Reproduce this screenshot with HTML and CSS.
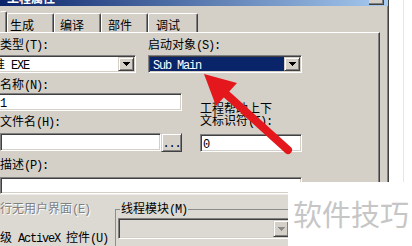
FILE: index.html
```html
<!DOCTYPE html>
<html>
<head>
<meta charset="utf-8">
<link rel="stylesheet" href="styles.css">
</head>
<body>
<div class="screen">
  <div class="dialog">
    <div class="titlebar"><span class="title">工程属性</span><span class="tclose"></span></div>
    <div class="tabs">
      <div class="tab sel"></div>
      <div class="tab t1">生成</div>
      <div class="tab t2">编译</div>
      <div class="tab t3">部件</div>
      <div class="tab t4">调试</div>
    </div>
    <div class="panel">
      <div class="rowA">
        <div class="fieldL">
          <div class="lbl">类型<span class="m">(T):</span></div>
          <div class="combo sunk cL">
            <div class="ctext">标准<span class="m"> EXE</span></div>
            <div class="dd raise"><svg width="7" height="4" viewBox="0 0 7 4"><path d="M0 0h7v1H0zM1 1h5v1H1zM2 2h3v1H2zM3 3h1v1H3z" fill="#000"/></svg></div>
          </div>
        </div>
        <div class="fieldR">
          <div class="lbl">启动对象<span class="m">(S):</span></div>
          <div class="combo sunk cR">
            <div class="ctext hl"><span class="m">Sub Main</span></div>
            <div class="dd raise"><svg width="7" height="4" viewBox="0 0 7 4"><path d="M0 0h7v1H0zM1 1h5v1H1zM2 2h3v1H2zM3 3h1v1H3z" fill="#000"/></svg></div>
          </div>
        </div>
      </div>
      <div class="rowB">
        <div class="colL">
          <div class="lbl">名称<span class="m">(N):</span></div>
          <div class="tb sunk tbName">工程<span class="m">1</span></div>
          <div class="lbl lblHelp">文件名<span class="m">(H):</span></div>
          <div class="helprow">
            <div class="tb sunk tbHelp"></div>
            <div class="btn raise"><span class="m">...</span></div>
          </div>
        </div>
        <div class="colR">
          <div class="lbl2">工程帮助上下<br>文标识符<span class="m">(I):</span></div>
          <div class="tb sunk tbCtx"><span class="m">0</span></div>
        </div>
      </div>
      <div class="lbl lblDesc">描述<span class="m">(P):</span></div>
      <div class="tb sunk tbDesc"></div>
      <div class="lower">
        <div class="ltexts">
          <div class="dis">行无用户界面<span class="m">(E)</span></div>
          <div class="act">级<span class="m"> ActiveX </span>控件<span class="m">(U)</span></div>
        </div>
        <fieldset class="group">
          <legend>线程模块<span class="m">(M)</span></legend>
          <div class="combo sunk cG">
            <div class="ctext"></div>
            <div class="dd raise"><svg width="7" height="4" viewBox="0 0 7 4"><path d="M0 0h7v1H0zM1 1h5v1H1zM2 2h3v1H2zM3 3h1v1H3z" fill="#8a8a8a"/></svg></div>
          </div>
        </fieldset>
      </div>
    </div>
  </div>
  <div class="outside"><div class="edge"></div></div>
  <div class="wm">软件技巧</div>
  <svg class="arrow" width="412" height="246" viewBox="0 0 412 246">
    <polygon points="204,74 216,106 237,83" fill="#e4181c"/>
    <line x1="225" y1="93" x2="288" y2="150" stroke="#e4181c" stroke-width="8" stroke-linecap="round"/>
  </svg>
</div>
</body>
</html>
```
FILE: styles.css
```css
* { box-sizing: border-box; }
html, body { margin: 0; padding: 0; }
body {
  width: 412px;
  height: 246px;
  overflow: hidden;
  background: #fff;
  font-family: "Noto Sans CJK SC", sans-serif;
  font-size: 12px;
  color: #000;
}
.m {
  font-family: "Liberation Mono", monospace;
  font-size: 12px;
  letter-spacing: -1.2px;
}
.screen {
  position: relative;
  display: flex;
  width: 412px;
  height: 246px;
  overflow: hidden;
}
.dialog {
  flex-shrink: 0;
  width: 389px;
  height: 246px;
  background: #d4d0c8;
  border-right: 1px solid #404040;
  box-shadow: inset -1px 0 #808080;
  display: flex;
  flex-direction: column;
  overflow: hidden;
}
.titlebar {
  flex-shrink: 0;
  height: 6px;
  display: flex;
  justify-content: space-between;
  align-items: flex-start;
  background: linear-gradient(to right, #0a246a, #a6caf0);
  overflow: hidden;
}
.title {
  color: #fff;
  font-weight: bold;
  line-height: 14px;
  margin-top: -9px;
  margin-left: 7px;
  white-space: nowrap;
}
.tclose {
  width: 15px;
  height: 5px;
  margin-right: 4px;
  background: #d4d0c8;
  border-right: 1px solid #404040;
  border-bottom: 1px solid #404040;
  box-shadow: inset -1px -1px #808080;
}
.tabs {
  flex-shrink: 0;
  height: 26px;
  display: flex;
  align-items: flex-end;
}
.tab {
  height: 19px;
  border-top: 1px solid #fff;
  border-left: 1px solid #fff;
  border-right: 1px solid #404040;
  box-shadow: inset -1px 0 #808080;
  border-top-left-radius: 2px;
  border-top-right-radius: 2px;
  padding-top: 4px;
  line-height: 14px;
  white-space: nowrap;
}
.tab.sel { width: 7px; height: 21px; border-left: none; }
.t1 { width: 47px; padding-left: 2px; }
.t2 { width: 47px; padding-left: 5px; }
.t3 { width: 47px; padding-left: 6px; }
.t4 { width: 50px; padding-left: 7px; }
.panel {
  flex: 1;
  width: 380px;
  border-top: 1px solid #fff;
  border-right: 1px solid #404040;
  box-shadow: inset -1px 0 #808080;
  display: flex;
  flex-direction: column;
}
.lbl {
  height: 14px;
  line-height: 14px;
  white-space: nowrap;
}
.sunk {
  background: #fff;
  border: 1px solid;
  border-color: #808080 #fff #fff #808080;
  box-shadow: inset 1px 1px #404040, inset -1px -1px #d4d0c8;
}
.raise {
  background: #d4d0c8;
  border: 1px solid;
  border-color: #d4d0c8 #404040 #404040 #d4d0c8;
  box-shadow: inset 1px 1px #fff, inset -1px -1px #808080;
}
.rowA {
  display: flex;
  padding-top: 4px;
}
.fieldL { width: 136px; }
.fieldR { width: 154px; margin-left: 12px; }
.combo {
  margin-top: 4px;
  height: 18px;
  padding: 1px;
  display: flex;
}
.cL { margin-left: -22px; width: 158px; }
.ctext {
  flex: 1;
  height: 14px;
  line-height: 14px;
  padding-left: 1px;
  white-space: nowrap;
  overflow: hidden;
}
.ctext.hl {
  background: #0a246a;
  color: #fff;
  padding-left: 3px;
}
.dd {
  width: 16px;
  height: 14px;
  display: flex;
  align-items: center;
  justify-content: center;
}
.dd svg { display: block; margin-left: 1px; }
.rowB {
  display: flex;
  align-items: flex-end;
  margin-top: 4px;
}
.colL { width: 182px; }
.colR { width: 102px; margin-left: 18px; }
.tb {
  height: 18px;
  line-height: 16px;
  padding-left: 2px;
  white-space: nowrap;
  overflow: hidden;
}
.tbName { margin-top: 2px; margin-left: -27px; width: 209px; }
.lblHelp { margin-top: 3px; }
.helprow { display: flex; margin-top: 5px; }
.tbHelp { width: 161px; }
.btn {
  width: 21px;
  height: 19px;
  line-height: 15px;
  text-align: center;
}
.lbl2 {
  line-height: 12px;
  white-space: nowrap;
}
.tbCtx { margin-top: 6px; width: 102px; }
.lblDesc { margin-top: 5px; }
.tbDesc { margin-top: 6px; width: 302px; height: 17px; }
.lower {
  height: 52px;
  background: #dcd9d3;
  border-top: 1px solid #eeece8;
  display: flex;
}
.ltexts { width: 115px; padding-top: 6px; }
.dis {
  color: #808080;
  text-shadow: 1px 1px #fff;
  line-height: 14px;
  white-space: nowrap;
}
.act {
  margin-top: 13px;
  line-height: 14px;
  white-space: nowrap;
}
.group {
  margin: 6px 0 0 0;
  padding: 0 0 0 2px;
  border: 1px solid #8c8c8c;
  width: 200px;
  height: 60px;
  min-width: 0;
}
.group legend {
  padding: 0 1px;
  margin-left: 2px;
  line-height: 14px;
  white-space: nowrap;
}
.cG {
  margin-top: 1px;
  width: 173px;
  height: 21px;
  background: #dcd9d3;
}
.cG .ctext { height: 17px; }
.cG .dd { height: 17px; }
.outside {
  flex: 1;
  display: flex;
  padding-left: 14px;
}
.edge { width: 1px; background: #e6e6e6; }
.wm {
  position: absolute;
  left: 288px;
  top: 182px;
  width: 124px;
  height: 64px;
  background: #fff;
  color: #c6c6c6;
  font-size: 29px;
  line-height: 29px;
  padding: 17px 0 0 5px;
  white-space: nowrap;
}
.arrow {
  position: absolute;
  left: 0;
  top: 0;
}
```
